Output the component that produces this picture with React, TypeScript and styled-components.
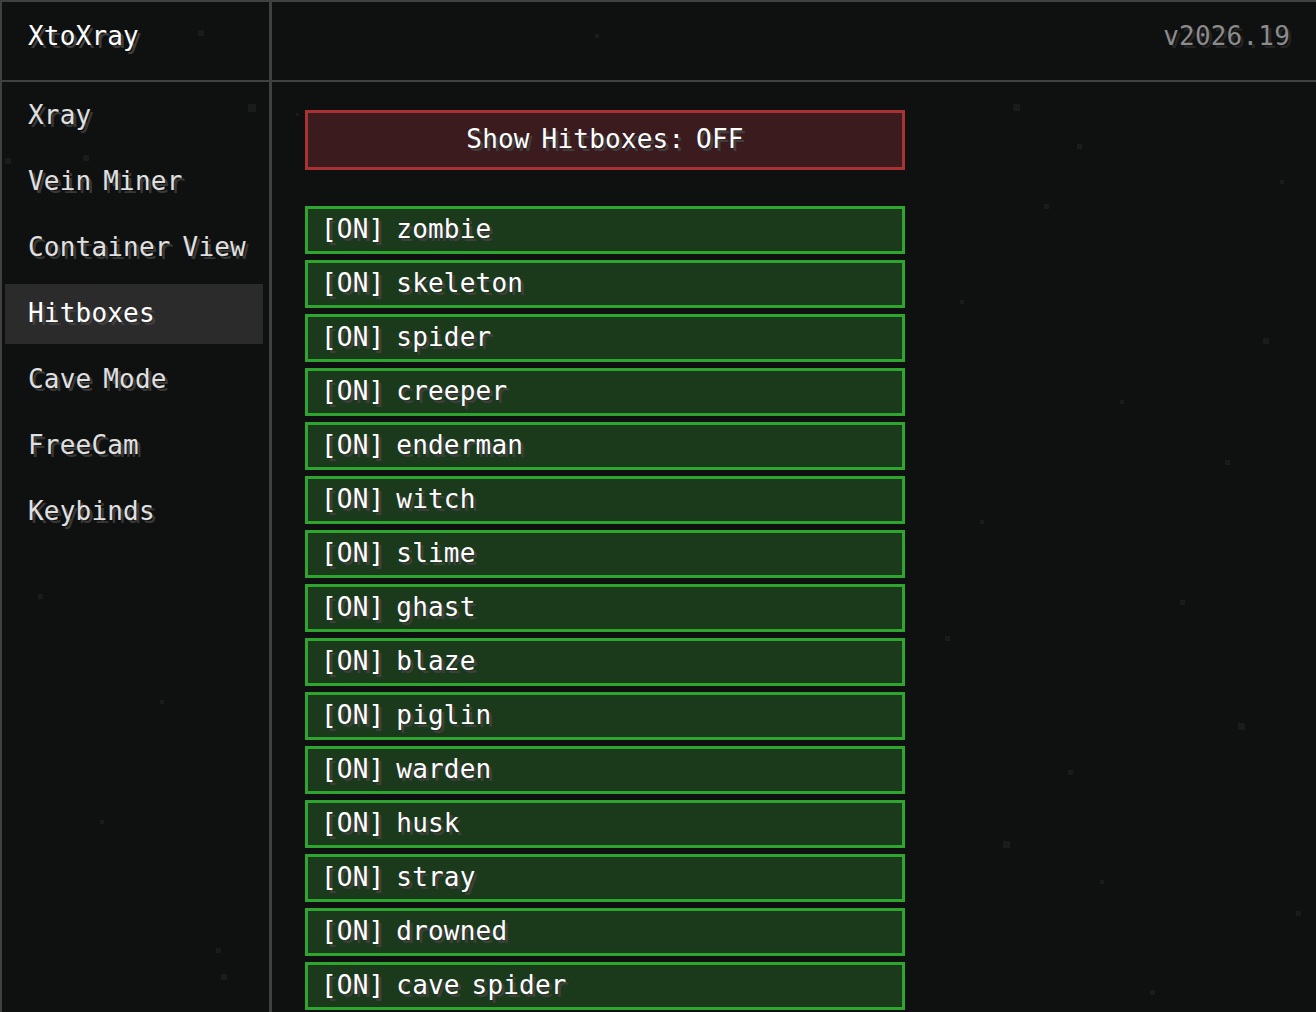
import React from "react";
import styled, { createGlobalStyle, css } from "styled-components";

const GlobalStyle = createGlobalStyle`
  html, body {
    margin: 0;
    padding: 0;
    background: #0f1010;
    overflow: hidden;
  }
  * {
    box-sizing: border-box;
  }
`;

const pixelFont = css`
  font-family: "DejaVu Sans Mono", "Liberation Mono", monospace;
  font-size: 26px;
  line-height: 1;
  letter-spacing: 0.2px;
  word-spacing: -4px;
  white-space: nowrap;
`;

const Screen = styled.div`
  position: relative;
  width: 1316px;
  height: 1012px;
  overflow: hidden;
  background: #0f1010;
`;

const Frame = styled.div`
  position: relative;
  z-index: 1;
  display: grid;
  grid-template-columns: 270px 1fr;
  grid-template-rows: 80px 1fr;
  height: 100%;
  border-top: 2px solid #404040;
  border-left: 2px solid #404040;
`;

const Brand = styled.div`
  ${pixelFont};
  display: flex;
  align-items: center;
  padding-left: 26px;
  padding-bottom: 10px;
  color: #ffffff;
  text-shadow: 3px 3px 0 #3e3e3e;
  border-right: 3px solid #404040;
  border-bottom: 2px solid #404040;
`;

const Version = styled.div`
  ${pixelFont};
  display: flex;
  align-items: center;
  justify-content: flex-end;
  padding-right: 26px;
  padding-bottom: 10px;
  color: #8b8b8b;
  text-shadow: 3px 3px 0 #232323;
  border-bottom: 2px solid #404040;
`;

const Sidebar = styled.nav`
  display: flex;
  flex-direction: column;
  gap: 6px;
  padding: 4px 6px 0 3px;
  border-right: 3px solid #404040;
`;

const NavItem = styled.div<{ $active?: boolean }>`
  ${pixelFont};
  display: flex;
  align-items: center;
  height: 60px;
  padding-left: 23px;
  padding-bottom: 2px;
  background: ${(p) => (p.$active ? "#2b2b2b" : "transparent")};
  color: ${(p) => (p.$active ? "#ffffff" : "#e0e0e0")};
  text-shadow: 3px 3px 0 ${(p) => (p.$active ? "#3f3f3f" : "#383838")};
`;

const Content = styled.main`
  display: flex;
  flex-direction: column;
  padding: 28px 0 0 33px;
`;

const MasterToggle = styled.div`
  ${pixelFont};
  display: flex;
  align-items: center;
  justify-content: center;
  width: 600px;
  height: 60px;
  margin-bottom: 36px;
  padding-bottom: 2px;
  background: #3c1b1e;
  border: 3px solid #a83234;
  color: #ffffff;
  text-shadow: 3px 3px 0 #3f3f3f;
`;

const MobList = styled.div`
  display: flex;
  flex-direction: column;
  gap: 6px;
`;

const MobRow = styled.div<{ $on: boolean }>`
  ${pixelFont};
  display: flex;
  align-items: center;
  width: 600px;
  height: 48px;
  flex-shrink: 0;
  padding-left: 13px;
  padding-bottom: 2px;
  background: ${(p) => (p.$on ? "#1b3a1b" : "#3c1b1e")};
  border: 3px solid ${(p) => (p.$on ? "#2ea52f" : "#a83234")};
  color: #ffffff;
  text-shadow: 3px 3px 0 #3f3f3f;
`;

const Speck = styled.span<{ $size: number }>`
  position: absolute;
  width: ${(p) => p.$size}px;
  height: ${(p) => p.$size}px;
  background: #1a1b1b;
  pointer-events: none;
`;

const specks: [number, number, number][] = [
  [198, 30, 6], [248, 104, 8], [5, 158, 6], [83, 155, 6], [296, 113, 3],
  [1013, 104, 7], [1077, 144, 5], [1044, 204, 5], [1263, 338, 6],
  [1238, 723, 7], [1003, 841, 7], [1068, 770, 5], [945, 636, 5],
  [1296, 911, 5], [221, 974, 6], [216, 948, 5], [38, 594, 5],
  [35, 444, 4], [1120, 400, 4], [980, 520, 4], [1180, 600, 5],
  [1150, 990, 5], [1280, 180, 4], [960, 300, 4], [1225, 460, 5],
  [595, 34, 4], [160, 700, 4], [100, 820, 4], [1100, 880, 4],
];

const navItems = [
  "Xray",
  "Vein Miner",
  "Container View",
  "Hitboxes",
  "Cave Mode",
  "FreeCam",
  "Keybinds",
];

const mobs = [
  "zombie",
  "skeleton",
  "spider",
  "creeper",
  "enderman",
  "witch",
  "slime",
  "ghast",
  "blaze",
  "piglin",
  "warden",
  "husk",
  "stray",
  "drowned",
  "cave spider",
];

export default function App() {
  const active = "Hitboxes";

  return (
    <>
      <GlobalStyle />
      <Screen>
        {specks.map(([x, y, s], i) => (
          <Speck key={i} $size={s} style={{ left: x, top: y }} />
        ))}
        <Frame>
          <Brand>XtoXray</Brand>
          <Version>v2026.19</Version>
          <Sidebar>
            {navItems.map((item) => (
              <NavItem key={item} $active={item === active}>
                {item}
              </NavItem>
            ))}
          </Sidebar>
          <Content>
            <MasterToggle>Show Hitboxes: OFF</MasterToggle>
            <MobList>
              {mobs.map((mob) => (
                <MobRow key={mob} $on>
                  [ON] {mob}
                </MobRow>
              ))}
            </MobList>
          </Content>
        </Frame>
      </Screen>
    </>
  );
}
